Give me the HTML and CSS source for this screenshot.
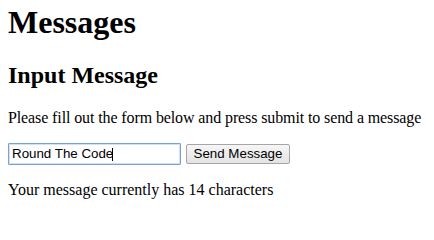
FILE: index.html
```html
<!DOCTYPE html>
<html lang="en">
<head>
<meta charset="utf-8">
<title>Messages</title>
<link rel="stylesheet" href="styles.css">
</head>
<body class="page">
<h1 class="title">Messages</h1>
<h2 class="subtitle">Input Message</h2>
<p class="text text-nowrap">Please fill out the form below and press submit to send a message</p>
<form class="form" onsubmit="return false">
  <span class="field">
    <input class="input" type="text" value="Round The Code">
    <span class="caret"></span>
  </span>
  <button class="button" type="submit">Send Message</button>
</form>
<p class="text">Your message currently has 14 characters</p>
</body>
</html>
```
FILE: styles.css
```css
html, body {
  background: #ffffff;
}
.page {
  margin: 0 8px 8px;
  font-family: "Liberation Serif", "Times New Roman", serif;
  font-size: 16px;
  color: #000000;
}
.title {
  font-size: 32px;
  font-weight: bold;
  margin: 3.5px 0 21.44px;
}
.subtitle {
  font-size: 24px;
  font-weight: bold;
  margin: 19.92px 0;
}
.text {
  margin: 16px 0;
}
.text-nowrap {
  white-space: nowrap;
  letter-spacing: -0.11px;
}
.form {
  display: flex;
  align-items: center;
  gap: 5px;
  margin: 0;
}
.field {
  position: relative;
  display: block;
  width: 173px;
  height: 22px;
}
.input {
  box-sizing: border-box;
  width: 173px;
  height: 22px;
  margin: 0;
  padding: 0 3px;
  border: 1px solid #7b9fd8;
  box-shadow: inset 0 0 0 1px #d3e0f4;
  border-radius: 1px;
  outline: none;
  font-family: "Liberation Sans", Arial, sans-serif;
  font-size: 13.33px;
  color: #000000;
  background: #ffffff;
  caret-color: transparent;
}
.caret {
  position: absolute;
  left: 104px;
  top: 5px;
  width: 1px;
  height: 13px;
  background: #000000;
}
.button {
  box-sizing: border-box;
  height: 20px;
  width: 104px;
  margin: 0;
  padding: 0 6px;
  border: 1px solid #a6a6a6;
  border-radius: 2px;
  background: linear-gradient(#f6f6f6, #e3e3e3);
  font-family: "Liberation Sans", Arial, sans-serif;
  font-size: 13.33px;
  color: #000000;
}
```
